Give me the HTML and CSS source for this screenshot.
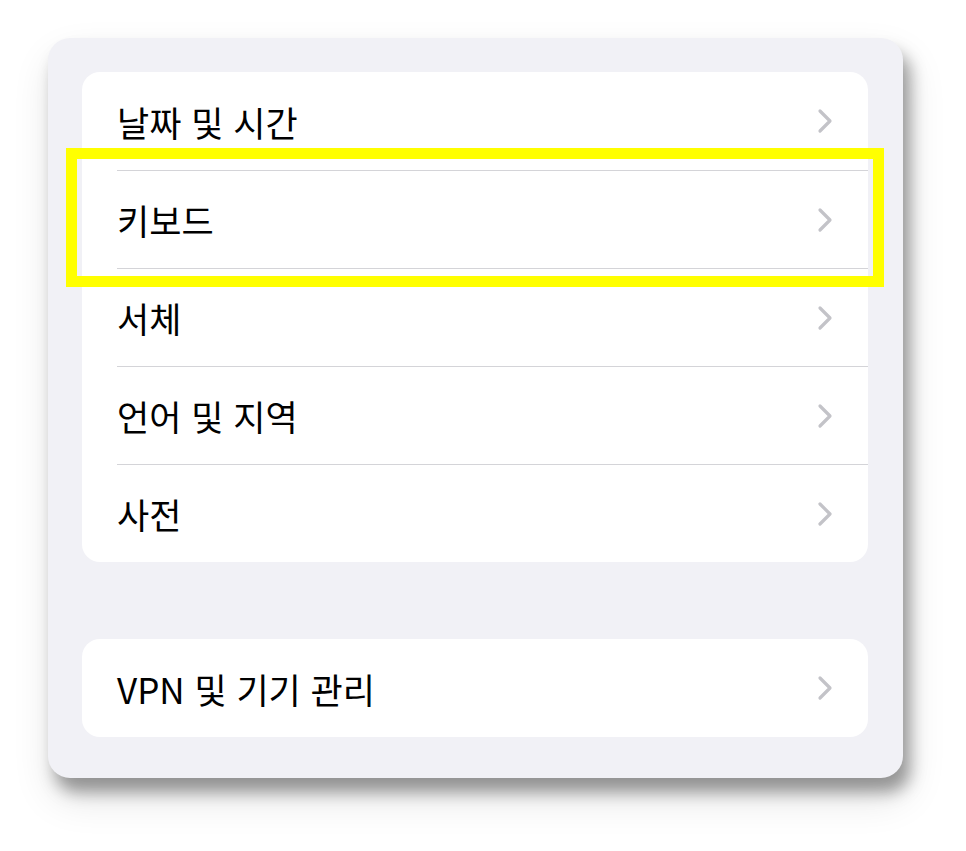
FILE: index.html
```html
<!DOCTYPE html>
<html lang="ko">
<head>
    <meta charset="UTF-8">
    <meta name="viewport" content="width=device-width, initial-scale=1.0">
    <title>설정</title>
    <link rel="stylesheet" href="styles.css">
</head>
<body>
    <div class="panel">
        <div class="group">
            <div class="row"><span>날짜 및 시간</span><svg class="chev" viewBox="0 0 16 26"><path d="M3 3 L13 13 L3 23"/></svg></div>
            <div class="row"><span>키보드</span><svg class="chev" viewBox="0 0 16 26"><path d="M3 3 L13 13 L3 23"/></svg></div>
            <div class="row"><span>서체</span><svg class="chev" viewBox="0 0 16 26"><path d="M3 3 L13 13 L3 23"/></svg></div>
            <div class="row"><span>언어 및 지역</span><svg class="chev" viewBox="0 0 16 26"><path d="M3 3 L13 13 L3 23"/></svg></div>
            <div class="row"><span>사전</span><svg class="chev" viewBox="0 0 16 26"><path d="M3 3 L13 13 L3 23"/></svg></div>
        </div>
        <div class="group">
            <div class="row"><span>VPN 및 기기 관리</span><svg class="chev" viewBox="0 0 16 26"><path d="M3 3 L13 13 L3 23"/></svg></div>
        </div>
        <div class="highlight"></div>
    </div>
</body>
</html>
```

FILE: styles.css
```css
html, body {
    margin: 0;
    background: #fff;
    font-family: "Noto Sans CJK KR", "Noto Sans", sans-serif;
}
body {
    min-height: 851px;
    padding: 38px 0 0 48px;
    box-sizing: border-box;
}
.panel {
    position: relative;
    width: 855px;
    height: 740px;
    box-sizing: border-box;
    padding: 34px 35px 0 34px;
    background: #f1f1f6;
    border-radius: 22px;
    box-shadow: 7px 14px 16px rgba(0, 0, 0, 0.36), 4px 20px 40px rgba(0, 0, 0, 0.12);
    display: flex;
    flex-direction: column;
    gap: 77px;
}
.group {
    background: #fff;
    border-radius: 18px;
    overflow: hidden;
}
.row {
    height: 98px;
    margin-left: 35px;
    padding-right: 35px;
    display: flex;
    align-items: center;
    justify-content: space-between;
    font-size: 35px;
    color: #000;
    border-top: 1px solid #d4d4d8;
    box-sizing: border-box;
}
.row:first-child {
    border-top: none;
}
.row span {
    line-height: 1;
}
.chev {
    width: 16px;
    height: 26px;
    fill: none;
    stroke: #c3c3c8;
    stroke-width: 3.2;
    stroke-linecap: round;
    stroke-linejoin: round;
}
.highlight {
    position: absolute;
    left: 18px;
    top: 110px;
    width: 818px;
    height: 139px;
    box-sizing: border-box;
    border: 11px solid #ffff00;
}
```
